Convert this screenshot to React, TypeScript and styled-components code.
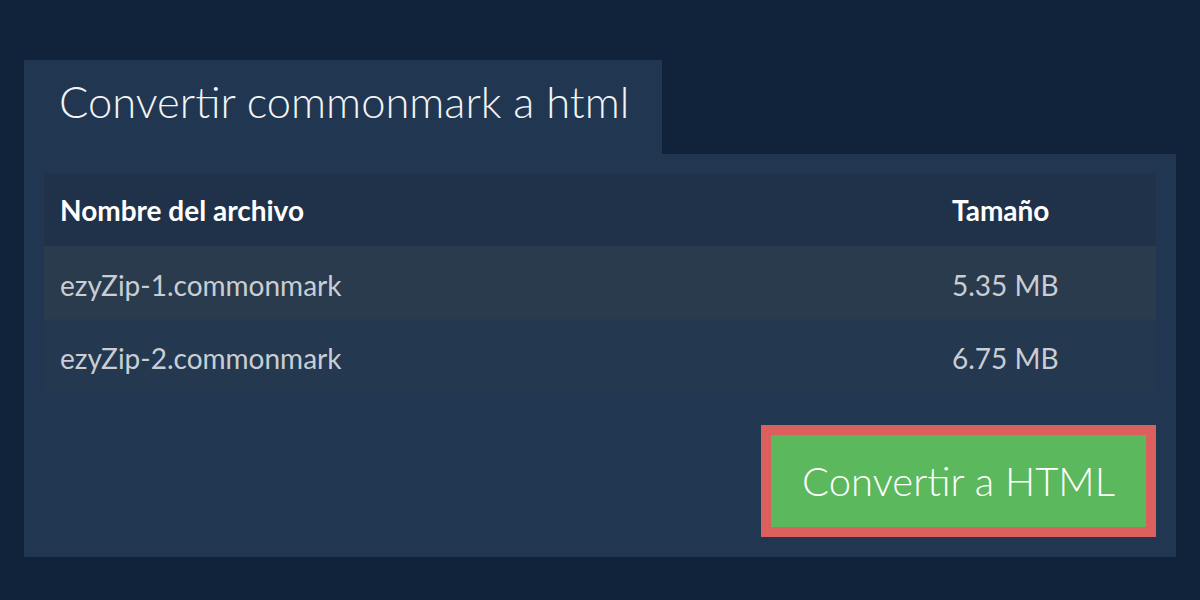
import * as React from 'react';
import styled, { createGlobalStyle } from 'styled-components';

const GlobalStyle = createGlobalStyle`
    html, body {
        margin: 0;
        padding: 0;
        background: #10233a;
        font-family: Lato, "Noto Sans", sans-serif;
    }
`;

const Page = styled.div`
    padding: 60px 24px 0 24px;
    width: 1152px;
`;

const Tab = styled.div`
    display: inline-block;
    box-sizing: border-box;
    width: 638px;
    height: 94px;
    padding: 14px 35px 0;
    background: #213651;
    color: #f2f4f6;
    font-size: 43.5px;
    font-weight: 300;
    line-height: 54px;
    white-space: nowrap;
`;

const Panel = styled.div`
    background: #213651;
    padding: 20px 20px 20px;
    display: flex;
    flex-direction: column;
    align-items: stretch;
`;

const Table = styled.table`
    width: 100%;
    border-collapse: collapse;
    font-size: 28px;
`;

const HeadCell = styled.th<{ $width?: number }>`
    text-align: left;
    font-weight: 700;
    color: #ffffff;
    background: #1f3249;
    height: 72px;
    padding: 0 16px;
    width: ${(p) => (p.$width ? `${p.$width}px` : 'auto')};
`;

const Row = styled.tr<{ $odd: boolean }>`
    background: ${(p) => (p.$odd ? '#2b3b4e' : '#243850')};
`;

const Cell = styled.td`
    box-sizing: border-box;
    color: #c9ced5;
    height: 73px;
    padding: 4px 16px 0;
`;

const Actions = styled.div`
    display: flex;
    justify-content: flex-end;
    padding-top: 33px;
`;

const ConvertButton = styled.button`
    box-sizing: border-box;
    width: 395px;
    height: 112px;
    border: 10px solid #db5f5c;
    background: #5cb85c;
    color: #ffffff;
    font-family: Lato, "Noto Sans", sans-serif;
    font-size: 40px;
    font-weight: 300;
    cursor: pointer;
    padding: 0;
`;

const files = [
    { name: 'ezyZip-1.commonmark', size: '5.35 MB' },
    { name: 'ezyZip-2.commonmark', size: '6.75 MB' },
];

export default function App() {
    return (
        <Page>
            <GlobalStyle />
            <Tab>Convertir commonmark a html</Tab>
            <Panel>
                <Table>
                    <thead>
                        <tr>
                            <HeadCell>Nombre del archivo</HeadCell>
                            <HeadCell $width={188}>Tamaño</HeadCell>
                        </tr>
                    </thead>
                    <tbody>
                        {files.map((file, i) => (
                            <Row key={file.name} $odd={i % 2 === 0}>
                                <Cell>{file.name}</Cell>
                                <Cell>{file.size}</Cell>
                            </Row>
                        ))}
                    </tbody>
                </Table>
                <Actions>
                    <ConvertButton>Convertir a HTML</ConvertButton>
                </Actions>
            </Panel>
        </Page>
    );
}
